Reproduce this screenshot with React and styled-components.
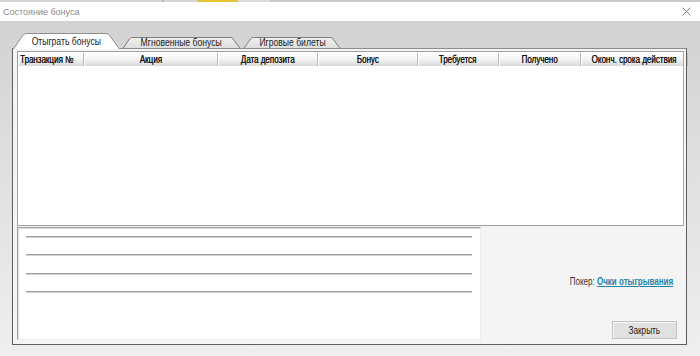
import React from "react"
import styled, { createGlobalStyle } from "styled-components"

const sans = `"Liberation Sans", Arial, sans-serif`

const columns = [
  { title: "Транзакция №", width: "66px", align: "left" },
  { title: "Акция", width: "134px" },
  { title: "Дата депозита", width: "100px" },
  { title: "Бонус", width: "100px" },
  { title: "Требуется", width: "81px" },
  { title: "Получено", width: "82px" },
  { title: "Оконч. срока действия", width: "1fr" },
]

const tabs = [
  { label: "Отыграть бонусы", width: 107, active: true },
  { label: "Мгновенные бонусы", width: 119 },
  { label: "Игровые билеты", width: 98 },
]

const tabPath = (w, h, active) => {
  if (active) {
    return `M0.5 ${h} L9 3.5 Q10.5 0.5 13.5 0.5 L${w - 14} 0.5 Q${w - 11.5} 0.5 ${w - 10.5} 2.5 L${w - 0.5} ${h}`
  }
  return `M0.5 ${h} L7.5 2 Q8.5 0.5 10.5 0.5 L${w - 10} 0.5 Q${w - 8.5} 0.5 ${w - 8} 2 L${w - 0.5} ${h}`
}

const Tab = ({ label, width, active }) => {
  const h = active ? 16 : 12
  return (
    <TabItem $active={active} $width={width}>
      <TabShape width={width} height={h} $active={active}>
        <defs>
          <linearGradient id="tabFill" x1="0" y1="0" x2="0" y2="1">
            <stop offset="0" stopColor="#f0f0f0" />
            <stop offset="1" stopColor="#dcdcdc" />
          </linearGradient>
        </defs>
        <path d={tabPath(width, h, active)} />
      </TabShape>
      <TabLabel>{label}</TabLabel>
    </TabItem>
  )
}

const App = () => {
  return (
    <>
      <GlobalStyle />
      <Window>
        <ScreenEdge />
        <TitleBar>
          <Title>Состояние бонуса</Title>
          <CloseIcon width="9" height="9" viewBox="0 0 9 9">
            <path d="M0.5 0.5 L8.5 8.5 M8.5 0.5 L0.5 8.5" />
          </CloseIcon>
        </TitleBar>
        <Body>
          <TabRow>
            {tabs.map((t) => (
              <Tab key={t.label} {...t} />
            ))}
          </TabRow>
          <Panel>
            <Table>
              <HeaderRow $cols={columns.map((c) => c.width).join(" ")}>
                {columns.map((c) => (
                  <HeaderCell key={c.title} $align={c.align}>
                    <HeaderText $align={c.align}>{c.title}</HeaderText>
                  </HeaderCell>
                ))}
              </HeaderRow>
            </Table>
            <BottomRow>
              <NotesBox>
                {[0, 1, 2, 3].map((i) => (
                  <Rule key={i} />
                ))}
              </NotesBox>
              <SideArea>
                <PokerLine>
                  Покер: <PokerLink href="#">Очки отыгрывания</PokerLink>
                </PokerLine>
                <CloseButton>
                  <ButtonText>Закрыть</ButtonText>
                </CloseButton>
              </SideArea>
            </BottomRow>
          </Panel>
        </Body>
      </Window>
    </>
  )
}

export default App

const GlobalStyle = createGlobalStyle`
  html, body {
    margin: 0;
    padding: 0;
  }
  body {
    width: 700px;
    height: 356px;
    overflow: hidden;
    background: #fff;
  }
`

const Window = styled.div`
  width: 700px;
  height: 356px;
  display: flex;
  flex-direction: column;
  background: linear-gradient(#d2d2d2 6%, #e2e2e2 55%, #efefef);
`

const ScreenEdge = styled.div`
  height: 2px;
  background: linear-gradient(
    90deg,
    #d6d6d6 0 162px,
    #b8b8b8 162px 164px,
    #d6d6d6 164px 197px,
    #e4c433 197px 238px,
    #dcdcdc 238px 270px,
    #c9c9c9 270px
  );
`

const TitleBar = styled.div`
  height: 19px;
  background: #fff;
  display: flex;
  align-items: center;
  justify-content: space-between;
  padding: 0 9px 0 3px;
`

const Title = styled.span`
  font-family: ${sans};
  font-size: 9px;
  color: #8a8a8a;
`

const CloseIcon = styled.svg`
  stroke: #7c7c7c;
  stroke-width: 1;
  fill: none;
`

const Body = styled.div`
  flex: 1;
  display: flex;
  flex-direction: column;
  padding: 0 13px 11px 12px;
`

const TabRow = styled.div`
  height: 28px;
  margin-bottom: -1px;
  padding-left: 1px;
  display: flex;
  align-items: flex-end;
  gap: 2px;
`

const TabItem = styled.div`
  position: relative;
  z-index: ${({ $active }) => ($active ? 2 : 0)};
  width: ${({ $width }) => $width}px;
  height: ${({ $active }) => ($active ? 16 : 12)}px;
  display: flex;
  align-items: center;
  justify-content: center;
  padding-bottom: ${({ $active }) => ($active ? 0 : 2)}px;
  box-sizing: border-box;
`

const TabShape = styled.svg`
  position: absolute;
  left: 0;
  top: 0;
  overflow: visible;
  fill: ${({ $active }) => ($active ? "#ffffff" : "url(#tabFill)")};
  stroke: ${({ $active }) => ($active ? "#8e8e8e" : "#7e7e7e")};
  stroke-width: 1;
`

const TabLabel = styled.span`
  position: relative;
  display: inline-block;
  font-family: ${sans};
  font-size: 10px;
  color: #222;
  white-space: nowrap;
  transform: scaleX(0.86);
`

const Panel = styled.div`
  position: relative;
  z-index: 1;
  flex: 1;
  display: flex;
  flex-direction: column;
  gap: 1px;
  background: #f4f4f4;
  border: 1px solid #5e5e5e;
  border-top-color: #8c8c8c;
  padding: 2px 2px 4px 4px;
`

const Table = styled.div`
  height: 175px;
  box-sizing: border-box;
  background: #fff;
  border: 1px solid #9f9f9f;
  border-right-color: #a8a8a8;
  padding-top: 1px;
`

const HeaderRow = styled.div`
  display: grid;
  grid-template-columns: ${({ $cols }) => $cols};
  height: 13px;
  background: linear-gradient(#ffffff, #f1f1f1 55%, #dadada);
`

const HeaderCell = styled.div`
  font-family: ${sans};
  font-size: 10px;
  line-height: 13px;
  color: #111;
  white-space: nowrap;
  text-align: ${({ $align }) => $align || "center"};
  padding-left: ${({ $align }) => ($align === "left" ? "2px" : "0")};
  border-right: 1px solid #b9b9b9;
  box-shadow: inset 1px 0 0 #fff;
`

const HeaderText = styled.span`
  display: inline-block;
  transform: scaleX(0.8);
  transform-origin: ${({ $align }) => ($align === "left" ? "left" : "center")};
  text-shadow: 0.3px 0 0 #333;
`

const BottomRow = styled.div`
  height: 113px;
  display: flex;
`

const NotesBox = styled.div`
  width: 464px;
  box-sizing: border-box;
  background: #fff;
  border: 1px solid #ececec;
  border-top-color: #a0a0a0;
  border-left-color: #a0a0a0;
  box-shadow: inset 1px 1px 0 #dcdcdc;
  padding: 8px 8px 0 8px;
  display: flex;
  flex-direction: column;
  gap: 16.4px;
`

const Rule = styled.div`
  height: 2px;
  box-sizing: border-box;
  border-top: 1px solid #9d9d9d;
  border-bottom: 1px solid #d4d4d4;
`

const SideArea = styled.div`
  flex: 1;
  display: flex;
  flex-direction: column;
  align-items: flex-end;
  justify-content: flex-end;
  padding: 0 7px 1px 0;
`

const PokerLine = styled.div`
  font-family: ${sans};
  font-size: 10px;
  line-height: 14px;
  color: #333;
  white-space: nowrap;
  margin: 0 4px 32px 0;
  transform: scaleX(0.8);
  transform-origin: right;
`

const PokerLink = styled.a`
  color: #1f86a8;
  font-weight: bold;
  text-decoration: underline;
`

const CloseButton = styled.button`
  width: 65px;
  height: 18px;
  box-sizing: border-box;
  margin: 0;
  padding: 0;
  font-family: ${sans};
  font-size: 10px;
  color: #222;
  background: #e1e1e1;
  border: 1px solid #c2c2c2;
  box-shadow: inset 1px 1px 0 #f6f6f6;
`

const ButtonText = styled.span`
  display: inline-block;
  transform: scaleX(0.82);
`
